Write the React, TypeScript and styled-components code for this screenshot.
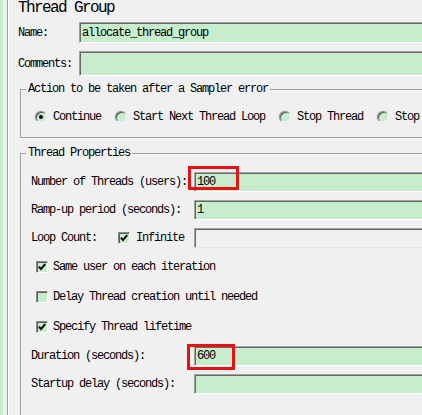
import React from "react";
import styled, { createGlobalStyle } from "styled-components";

const GREEN = "#C7EDCC";
const BG = "#F0F0F0";

const Global = createGlobalStyle`
  html, body { margin: 0; padding: 0; background: ${BG}; overflow: hidden; }
  body {
    font-family: "Liberation Mono", "Courier New", monospace;
    font-size: 12px;
    letter-spacing: -1.2px;
    color: #000;
  }
`;

const Page = styled.div`
  display: flex;
  width: 520px;
  height: 415px;
  overflow: hidden;
  background: ${BG};
`;

const Strip = styled.div`
  flex: none;
  width: 3px;
  background: ${GREEN};
`;

const Panel = styled.div`
  flex: 1;
  display: flex;
  flex-direction: column;
  margin-left: 4px;
  padding-left: 10px;
  border-left: 1px solid #a0a0a0;
  box-shadow: inset 1px 0 0 #ffffff;
`;

const Title = styled.div`
  font-size: 16px;
  letter-spacing: -1.6px;
  line-height: 16px;
  height: 15px;
`;

const Row = styled.div<{ $label: number; $mt?: number; $h: number }>`
  flex: none;
  display: grid;
  grid-template-columns: ${(p) => p.$label}px 1fr;
  grid-template-rows: ${(p) => p.$h}px;
  align-items: stretch;
  margin-top: ${(p) => p.$mt ?? 0}px;
`;

const Label = styled.span`
  align-self: center;
  white-space: nowrap;
  line-height: 14px;
`;

const Cell = styled.div`
  position: relative;
`;

const Field = styled.div<{ $disabled?: boolean }>`
  box-sizing: border-box;
  height: 100%;
  background: ${(p) => (p.$disabled ? BG : GREEN)};
  border-top: 1px solid #a0a0a0;
  border-left: 1px solid #a0a0a0;
  border-bottom: 1px solid ${(p) => (p.$disabled ? "#e3e3e3" : "#ffffff")};
  border-right: 1px solid #ffffff;
  box-shadow: inset 1px 1px 0 #696969;
  padding-left: 2px;
  display: flex;
  align-items: center;
  white-space: nowrap;
`;

const Annot = styled.div<{ $top: number; $left: number; $w: number; $h: number }>`
  position: absolute;
  top: ${(p) => p.$top}px;
  left: ${(p) => p.$left}px;
  width: ${(p) => p.$w}px;
  height: ${(p) => p.$h}px;
  box-sizing: border-box;
  border: 3px solid #e81010;
  pointer-events: none;
`;

const Group = styled.fieldset<{ $mt: number }>`
  margin: ${(p) => p.$mt}px 0 0 2px;
  padding: 0;
  border: 1px solid #a0a0a0;
  min-width: 0;
`;

const Legend = styled.legend`
  margin-left: 5px;
  padding: 0 2px;
  line-height: 14px;
  font-size: 12px;
`;

const RadioRow = styled.div`
  display: flex;
  align-items: center;
  gap: 14px;
  height: 14px;
  padding: 14px 0 13px 14px;
  white-space: nowrap;
`;

const Choice = styled.label`
  display: flex;
  align-items: center;
  gap: 6px;
  line-height: 14px;
`;

const RadioDot = styled.span<{ $on?: boolean }>`
  flex: none;
  box-sizing: border-box;
  width: 12px;
  height: 12px;
  border-radius: 50%;
  background: ${GREEN};
  border: 1px solid;
  border-color: #8a8a8a #ffffff #ffffff #8a8a8a;
  box-shadow: inset 1px 1px 0 #5a5a5a, 0 0 0 0.5px #d8d8d8;
  display: flex;
  align-items: center;
  justify-content: center;
  &::after {
    content: "";
    width: 4px;
    height: 4px;
    border-radius: 50%;
    background: #000;
    display: ${(p) => (p.$on ? "block" : "none")};
  }
`;

const Box = styled.span`
  flex: none;
  box-sizing: border-box;
  width: 12px;
  height: 12px;
  background: ${GREEN};
  border-top: 1px solid #8a8a8a;
  border-left: 1px solid #8a8a8a;
  border-right: 1px solid #ffffff;
  border-bottom: 1px solid #ffffff;
  box-shadow: inset 1px 1px 0 #5a5a5a;
  display: flex;
  align-items: center;
  justify-content: center;
`;

const Props = styled.div`
  display: flex;
  flex-direction: column;
  gap: 8px;
  padding: 12px 0 60px 10px;
`;

const CheckLine = styled.div`
  display: flex;
  align-items: center;
  gap: 5px;
  height: 22px;
  padding-left: 5px;
  white-space: nowrap;
`;

const LoopLabel = styled.div`
  align-self: center;
  display: flex;
  align-items: center;
  white-space: nowrap;
`;

const LoopText = styled.span`
  width: 87px;
  line-height: 14px;
`;

const Check = ({ on }: { on?: boolean }) => (
  <Box>
    {on && (
      <svg width="8" height="8" viewBox="0 0 8 8">
        <polyline points="0.8,3.6 3,6 7.2,1.2" fill="none" stroke="#000" strokeWidth="1.9" />
      </svg>
    )}
  </Box>
);

export default function App() {
  return (
    <>
      <Global />
      <Page>
        <Strip />
        <Panel>
          <Title>Thread Group</Title>
          <Row $label={61} $mt={7} $h={21}>
            <Label>Name:</Label>
            <Cell>
              <Field>allocate_thread_group</Field>
            </Cell>
          </Row>
          <Row $label={61} $mt={8} $h={25}>
            <Label>Comments:</Label>
            <Cell>
              <Field />
            </Cell>
          </Row>

          <Group $mt={6}>
            <Legend>Action to be taken after a Sampler error</Legend>
            <RadioRow>
              <Choice>
                <RadioDot $on />
                Continue
              </Choice>
              <Choice>
                <RadioDot />
                Start Next Thread Loop
              </Choice>
              <Choice>
                <RadioDot />
                Stop Thread
              </Choice>
              <Choice>
                <RadioDot />
                Stop Test
              </Choice>
            </RadioRow>
          </Group>

          <Group $mt={8}>
            <Legend>Thread Properties</Legend>
            <Props>
              <Row $label={163} $h={20}>
                <Label>Number of Threads (users):</Label>
                <Cell>
                  <Field>100</Field>
                  <Annot $top={-6} $left={-6} $w={51} $h={24} />
                </Cell>
              </Row>
              <Row $label={163} $h={20}>
                <Label>Ramp-up period (seconds):</Label>
                <Cell>
                  <Field>1</Field>
                </Cell>
              </Row>
              <Row $label={163} $h={20}>
                <LoopLabel>
                  <LoopText>Loop Count:</LoopText>
                  <Choice>
                    <Check on />
                    Infinite
                  </Choice>
                </LoopLabel>
                <Cell>
                  <Field $disabled />
                </Cell>
              </Row>
              <CheckLine>
                <Check on />
                Same user on each iteration
              </CheckLine>
              <CheckLine>
                <Check />
                Delay Thread creation until needed
              </CheckLine>
              <CheckLine>
                <Check on />
                Specify Thread lifetime
              </CheckLine>
              <Row $label={163} $h={20}>
                <Label>Duration (seconds):</Label>
                <Cell>
                  <Field>600</Field>
                  <Annot $top={-2} $left={-7} $w={48} $h={26} />
                </Cell>
              </Row>
              <Row $label={163} $h={20}>
                <Label>Startup delay (seconds):</Label>
                <Cell>
                  <Field />
                </Cell>
              </Row>
            </Props>
          </Group>
        </Panel>
      </Page>
    </>
  );
}
